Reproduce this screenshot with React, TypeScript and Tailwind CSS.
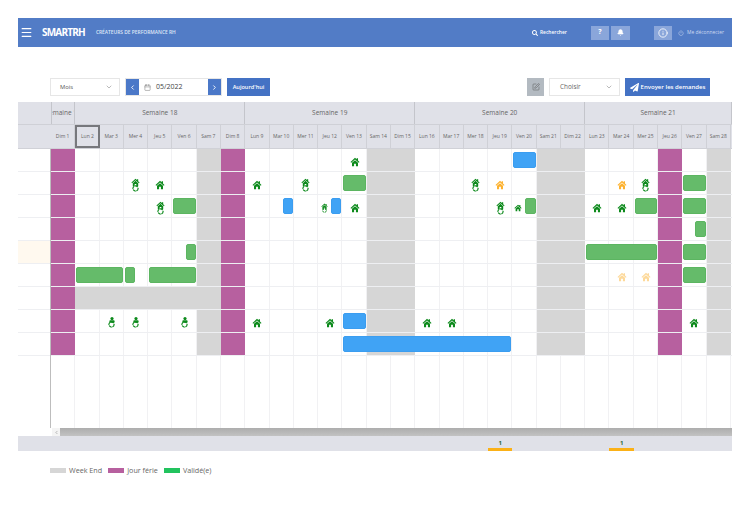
import { Bell, Calendar, ChevronDown, ChevronLeft, ChevronRight, Info, Menu, Power, SquarePen } from 'lucide-react';
import { FaPaperPlane, FaSearch } from 'react-icons/fa';

const days = [
  'Dim 1', 'Lun 2', 'Mar 3', 'Mer 4', 'Jeu 5', 'Ven 6', 'Sam 7',
  'Dim 8', 'Lun 9', 'Mar 10', 'Mer 11', 'Jeu 12', 'Ven 13', 'Sam 14',
  'Dim 15', 'Lun 16', 'Mar 17', 'Mer 18', 'Jeu 19', 'Ven 20', 'Sam 21',
  'Dim 22', 'Lun 23', 'Mar 24', 'Mer 25', 'Jeu 26', 'Ven 27', 'Sam 28',
];

const weeks = [
  { label: 'Semaine 18', start: 1 },
  { label: 'Semaine 19', start: 8 },
  { label: 'Semaine 20', start: 15 },
  { label: 'Semaine 21', start: 22 },
];

const holidays = [0, 7, 25];
const weekend = [6, 13, 14, 20, 21, 27];

type Item =
  | { bar: 'green' | 'blue' | 'grey'; from: number; to: number }
  | { icon: 'home' | 'ring' | 'baby'; at: number; color?: 'orange' | 'pale'; small?: boolean };

// from / to / at are counted in half days
const rows: Item[][] = [
  [{ icon: 'home', at: 24 }, { bar: 'blue', from: 38, to: 40 }],
  [
    { icon: 'ring', at: 6 }, { icon: 'home', at: 8 }, { icon: 'home', at: 16 }, { icon: 'ring', at: 20 },
    { bar: 'green', from: 24, to: 26 }, { icon: 'ring', at: 34 }, { icon: 'home', at: 36, color: 'orange' },
    { icon: 'home', at: 46, color: 'orange' }, { icon: 'ring', at: 48 }, { bar: 'green', from: 52, to: 54 },
  ],
  [
    { icon: 'ring', at: 8 }, { bar: 'green', from: 10, to: 12 }, { bar: 'blue', from: 19, to: 20 },
    { icon: 'ring', at: 22, small: true }, { bar: 'blue', from: 23, to: 24 }, { icon: 'home', at: 24 },
    { icon: 'ring', at: 36 }, { icon: 'home', at: 38, small: true }, { bar: 'green', from: 39, to: 40 },
    { icon: 'home', at: 44 }, { icon: 'home', at: 46 }, { bar: 'green', from: 48, to: 50 },
    { bar: 'green', from: 52, to: 54 },
  ],
  [{ bar: 'green', from: 53, to: 54 }],
  [{ bar: 'green', from: 11, to: 12 }, { bar: 'green', from: 44, to: 50 }, { bar: 'green', from: 52, to: 54 }],
  [
    { bar: 'green', from: 2, to: 6 }, { bar: 'green', from: 6, to: 7 }, { bar: 'green', from: 8, to: 12 },
    { icon: 'home', at: 46, color: 'pale' }, { icon: 'home', at: 48, color: 'pale' }, { bar: 'green', from: 52, to: 54 },
  ],
  [{ bar: 'grey', from: 2, to: 12 }],
  [
    { icon: 'baby', at: 4 }, { icon: 'baby', at: 6 }, { icon: 'baby', at: 10 }, { icon: 'home', at: 16 },
    { icon: 'home', at: 22 }, { bar: 'blue', from: 24, to: 26 }, { icon: 'home', at: 30 }, { icon: 'home', at: 32 },
    { icon: 'home', at: 52 },
  ],
  [{ bar: 'blue', from: 24, to: 38 }],
];

const iconColors = { green: '#0d8a1c', orange: '#fdb22f', pale: '#fdd99a' };

function HomeShape({ color, size }: { color: string; size: number }) {
  return (
    <svg width={size} height={size} viewBox="0 0 12 12" fill={color}>
      <path d="M6 1 L0.6 6 L1.5 7 L6 2.9 L10.5 7 L11.4 6 L9.6 4.3 V1.5 H8 V2.8 Z" />
      <path d="M2.4 7 L6 3.8 L9.6 7 V11 H7.1 V8 H4.9 V11 H2.4 Z" />
    </svg>
  );
}

function ItemIcon({ icon, color, small }: { icon: 'home' | 'ring' | 'baby'; color?: 'orange' | 'pale'; small?: boolean }) {
  const fill = iconColors[color ?? 'green'];
  if (icon === 'home') return <HomeShape color={fill} size={small ? 8 : 10} />;
  return (
    <div className="flex flex-col items-center">
      {icon === 'ring' ? (
        <HomeShape color={fill} size={small ? 7 : 9} />
      ) : (
        <svg width="6" height="6" viewBox="0 0 6 6" fill={fill}>
          <circle cx="3" cy="1.6" r="1.6" />
          <rect x="0.4" y="3.2" width="5.2" height="2.6" rx="0.8" />
        </svg>
      )}
      <svg width={small ? 5 : 7} height={small ? 5 : 7} viewBox="0 0 7 7" fill="none" stroke={fill} strokeWidth="1.2" className="mt-[-2px]">
        <circle cx="3.5" cy="3.5" r="2.6" strokeDasharray="3 0.8" />
      </svg>
    </div>
  );
}

const barClass = {
  green: 'bg-[#65bb6a] border border-[#5cb561] rounded-[2px] mx-[1px] my-[3px]',
  blue: 'bg-[#40a3f5] border border-[#3b9df0] rounded-[2px] mx-[1px] my-[3px]',
  grey: 'bg-[#d6d6d6]',
};

function Toolbar() {
  return (
    <div className="mt-[31px] flex h-[18px] items-stretch whitespace-nowrap pl-[32px] pr-[22px] text-[5.8px] text-[#555]">
      <div className="flex w-[70px] items-center justify-between border border-[#e6e6e6] pl-[9px] pr-[6px]">
        <span>Mois</span>
        <ChevronDown size={8} className="text-[#999]" />
      </div>
      <div className="ml-[5px] flex w-[97px] border border-[#e6e6e6]">
        <div className="flex w-[13px] items-center justify-center bg-[#4b78c8] text-white">
          <ChevronLeft size={7} strokeWidth={3} />
        </div>
        <div className="flex flex-1 items-center pl-[5px]">
          <Calendar size={7} className="text-[#888]" />
          <span className="ml-[5px] text-[7px] text-[#444]">05/2022</span>
        </div>
        <div className="flex w-[13px] items-center justify-center bg-[#4b78c8] text-white">
          <ChevronRight size={7} strokeWidth={3} />
        </div>
      </div>
      <div className="ml-[5px] flex w-[43px] items-center justify-center bg-[#4472c4] text-[5.6px] font-semibold text-white">
        Aujourd'hui
      </div>
      <div className="ml-auto flex w-[17px] items-center justify-center bg-[#b3bac1] text-[#555]">
        <SquarePen size={8} strokeWidth={1.5} />
      </div>
      <div className="ml-[5px] flex w-[71px] items-center justify-between border border-[#e6e6e6] pl-[10px] pr-[6px] text-[6.4px] text-[#666]">
        <span>Choisir</span>
        <ChevronDown size={8} className="text-[#999]" />
      </div>
      <div className="ml-[5px] flex w-[85px] items-center justify-center gap-[2px] bg-[#4472c4] text-[6px] font-semibold text-white">
        <FaPaperPlane size={9} />
        Envoyer les demandes
      </div>
    </div>
  );
}

function TableHead() {
  return (
    <div className="mt-[6px] bg-[#e0e1e8] text-[#666]">
      <div className="grid h-[23px] grid-cols-[33px_repeat(56,12.143px)] border-b border-[#cfd0d6] text-[6.5px]">
        <div className="col-start-2 col-span-2 flex items-center justify-center overflow-hidden border-x border-[#c4c5cb] whitespace-nowrap">
          Semaine 17
        </div>
        {weeks.map((week) => (
          <div
            key={week.label}
            className="flex items-center justify-center border-r border-[#c4c5cb]"
            style={{ gridColumn: `${week.start * 2 + 2} / span 14` }}
          >
            {week.label}
          </div>
        ))}
      </div>
      <div className="grid h-[24px] grid-cols-[33px_repeat(56,12.143px)] border-b border-[#d0d1d7] text-[5px]">
        {days.map((day, i) => (
          <div
            key={day}
            className={
              i === 1
                ? 'flex items-center justify-center border-2 border-[#77787c]'
                : 'flex items-center justify-center border-r border-[#cfd0d6]'
            }
            style={{ gridColumn: `${i * 2 + 2} / span 2` }}
          >
            {day}
          </div>
        ))}
      </div>
    </div>
  );
}

function Row({ items, index }: { items: Item[]; index: number }) {
  return (
    <div className="grid h-[23px] grid-cols-[33px_repeat(56,12.143px)] grid-rows-1 border-b border-[#eeeff2]">
      <div className={index === 4 ? 'row-start-1 bg-[#fff9ef]' : 'row-start-1'} style={{ gridColumn: '1' }} />
      {days.map((day, i) => (
        <div
          key={day}
          className={
            holidays.includes(i)
              ? 'row-start-1 bg-[#b7609f]'
              : weekend.includes(i)
                ? 'row-start-1 bg-[#d6d6d6]'
                : 'row-start-1 border-r border-[#f1f1f3]'
          }
          style={{ gridColumn: `${i * 2 + 2} / span 2` }}
        />
      ))}
      {items.map((item, i) =>
        'bar' in item ? (
          <div
            key={i}
            className={`row-start-1 ${barClass[item.bar]}`}
            style={{ gridColumn: `${item.from + 2} / ${item.to + 2}` }}
          />
        ) : (
          <div
            key={i}
            className="row-start-1 flex items-center justify-center pt-[3px]"
            style={{ gridColumn: item.small ? `${item.at + 2} / span 1` : `${item.at + 2} / span 2` }}
          >
            <ItemIcon icon={item.icon} color={item.color} small={item.small} />
          </div>
        ),
      )}
    </div>
  );
}

export default function App() {
  return (
    <main className="h-[510px] w-[750px] overflow-hidden bg-white pt-[18px] font-['Open_Sans',sans-serif]">
      <div className="ml-[18px] w-[714px] overflow-hidden">
        <header className="flex h-[29px] items-center whitespace-nowrap bg-[#527cc6] text-white">
          <Menu size={13} strokeWidth={2.2} className="ml-[2px]" />
          <span className="ml-[9px] text-[10px] font-bold tracking-[-0.8px]">SMARTRH</span>
          <span className="ml-[11px] text-[4.9px] font-semibold text-[#dfe7f6]">CRÉATEURS DE PERFORMANCE RH</span>
          <div className="ml-auto flex items-center">
            <FaSearch size={6} />
            <span className="ml-[2px] w-[26px] text-[4.9px] font-semibold">Rechercher</span>
            <div className="ml-[25px] flex h-[14px] w-[18px] items-center justify-center bg-[#8aa6da] text-[7px] font-bold">?</div>
            <div className="ml-[2px] flex h-[14px] w-[19px] items-center justify-center bg-[#8aa6da]">
              <Bell size={7} fill="white" />
            </div>
            <div className="ml-[24px] flex h-[14px] w-[18px] items-center justify-center bg-[#8aa6da]">
              <Info size={10} />
            </div>
            <Power size={6} className="ml-[6px] text-[#cdd9f0]" />
            <span className="ml-[3px] mr-[6px] w-[39px] text-[4.9px] text-[#cdd9f0]">Me déconnecter</span>
          </div>
        </header>

        <Toolbar />
        <TableHead />

        <div className="relative h-[279px]">
          {rows.map((items, i) => (
            <Row key={i} items={items} index={i} />
          ))}
          <div className="grid h-[72px] grid-cols-[33px_repeat(56,12.143px)] grid-rows-1">
            {days.map((day, i) => (
              <div key={day} className="border-r border-[#f1f1f3]" style={{ gridColumn: `${i * 2 + 2} / span 2` }} />
            ))}
          </div>
          <div className="absolute left-[32px] top-0 h-full w-px bg-[#bdbdbd]" />
        </div>

        <div className="flex h-[8px]">
          <div className="w-[33px]" />
          <div className="ml-px flex w-[8px] items-center justify-center bg-[#f4f4f4]">
            <ChevronLeft size={5} className="text-[#666]" />
          </div>
          <div className="flex-1 bg-gradient-to-b from-[#adadad] to-[#c2c2c2]" />
        </div>

        <div className="grid h-[15px] grid-cols-[33px_repeat(56,12.143px)] bg-[#e0e1e8]">
          {[18, 23].map((col) => (
            <div
              key={col}
              className="flex flex-col items-center justify-end border-b-[3px] border-[#fbb117] text-[6px] font-bold text-[#2d6a3a]"
              style={{ gridColumn: `${col * 2 + 2} / span 2` }}
            >
              1
            </div>
          ))}
        </div>
      </div>

      <div className="ml-[50px] mt-[14px] flex items-center text-[7.2px] text-[#666]">
        <span className="h-[5px] w-[16px] bg-[#d6d6d6]" />
        <span className="ml-[3px]">Week End</span>
        <span className="ml-[6px] h-[5px] w-[16px] bg-[#b7609f]" />
        <span className="ml-[3px]">Jour férie</span>
        <span className="ml-[6px] h-[5px] w-[16px] bg-[#22c35e]" />
        <span className="ml-[3px]">Validé(e)</span>
      </div>
    </main>
  );
}
